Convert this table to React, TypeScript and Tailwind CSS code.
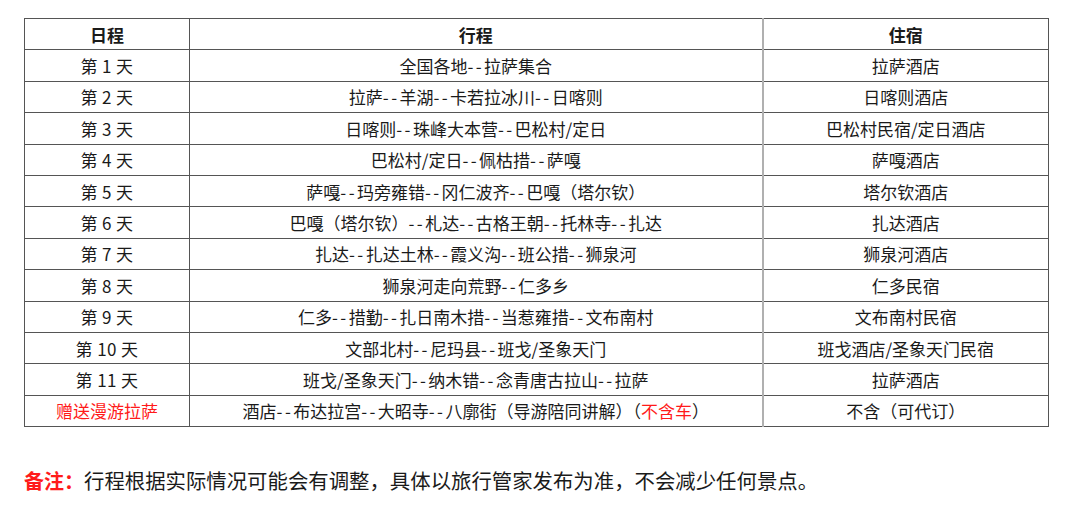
import React from "react";

const rows: [string, string, string][] = [
  ["第 1 天", "全国各地--拉萨集合", "拉萨酒店"],
  ["第 2 天", "拉萨--羊湖--卡若拉冰川--日喀则", "日喀则酒店"],
  ["第 3 天", "日喀则--珠峰大本营--巴松村/定日", "巴松村民宿/定日酒店"],
  ["第 4 天", "巴松村/定日--佩枯措--萨嘎", "萨嘎酒店"],
  ["第 5 天", "萨嘎--玛旁雍错--冈仁波齐--巴嘎（塔尔钦）", "塔尔钦酒店"],
  ["第 6 天", "巴嘎（塔尔钦）--札达--古格王朝--托林寺--扎达", "扎达酒店"],
  ["第 7 天", "扎达--扎达土林--霞义沟--班公措--狮泉河", "狮泉河酒店"],
  ["第 8 天", "狮泉河走向荒野--仁多乡", "仁多民宿"],
  ["第 9 天", "仁多--措勤--扎日南木措--当惹雍措--文布南村", "文布南村民宿"],
  ["第 10 天", "文部北村--尼玛县--班戈/圣象天门", "班戈酒店/圣象天门民宿"],
  ["第 11 天", "班戈/圣象天门--纳木错--念青唐古拉山--拉萨", "拉萨酒店"],
];

function Route({ text }: { text: string }) {
  const parts = text.split("--");
  return (
    <>
      {parts.map((p, i) => (
        <React.Fragment key={i}>
          {i > 0 && <span className="tracking-[2.4px]">--</span>}
          {p}
        </React.Fragment>
      ))}
    </>
  );
}

export default function App() {
  const font = { fontFamily: '"Noto Sans CJK SC", "Noto Sans", sans-serif' };
  return (
    <div className="w-[1080px] h-[518px] bg-white text-[#1a1a1a]" style={font}>
      <div className="pt-[18px] pl-[24px]">
        <table className="table-fixed border-collapse w-[1024px] text-[17px] leading-none">
          <colgroup>
            <col className="w-[165px]" />
            <col className="w-[573px]" />
            <col className="w-[286px]" />
          </colgroup>
          <thead>
            <tr className="h-[31.4px]">
              <th className="border border-[#555] font-bold text-center">日程</th>
              <th className="border border-[#555] border-r-2 border-r-[#b0b0b0] font-bold text-center">行程</th>
              <th className="border border-[#555] font-bold text-center">住宿</th>
            </tr>
          </thead>
          <tbody>
            {rows.map(([d, r, h]) => (
              <tr key={d} className="h-[31.4px]">
                <td className="border border-[#555] text-center tracking-[0.4px]">{d}</td>
                <td className="border border-[#555] border-r-2 border-r-[#b0b0b0] text-center">
                  <Route text={r} />
                </td>
                <td className="border border-[#555] text-center">{h}</td>
              </tr>
            ))}
            <tr className="h-[31.4px]">
              <td className="border border-[#555] text-center text-[#ff1a1a]">赠送漫游拉萨</td>
              <td className="border border-[#555] border-r-2 border-r-[#b0b0b0] text-center">
                <Route text="酒店--布达拉宫--大昭寺--八廓街（导游陪同讲解）" />（
                <span className="text-[#ff1a1a]">不含车</span>）
              </td>
              <td className="border border-[#555] text-center">不含（可代订）</td>
            </tr>
          </tbody>
        </table>
        <div className="mt-[43px] text-[20.4px] leading-none flex items-baseline">
          <span className="text-[#ff1a1a] font-bold text-[20px]">备注：</span>
          <span>行程根据实际情况可能会有调整，具体以旅行管家发布为准，不会减少任何景点。</span>
        </div>
      </div>
    </div>
  );
}
